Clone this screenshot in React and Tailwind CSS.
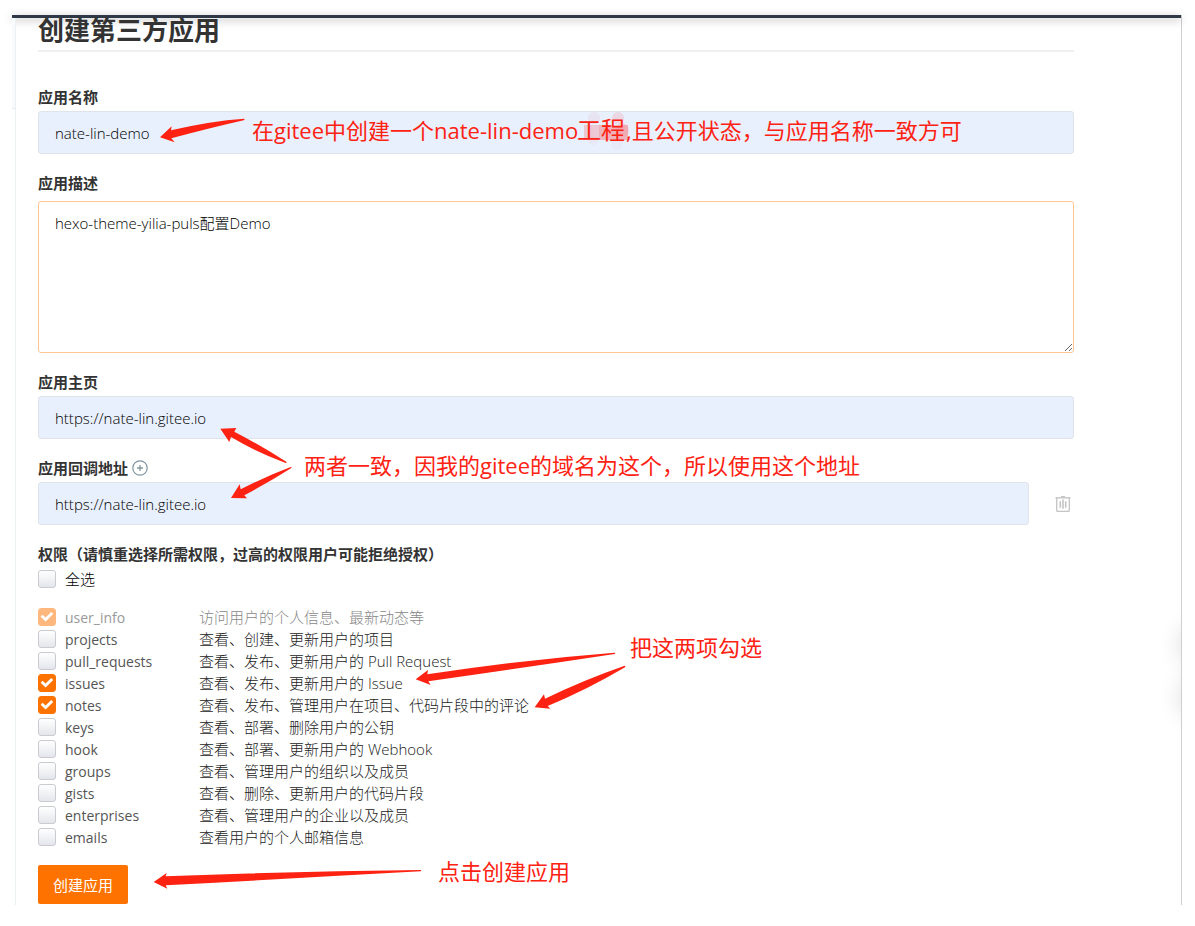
import { useState } from "react";

const SCOPES = [
    { name: "user_info", desc: "访问用户的个人信息、最新动态等", locked: true },
    { name: "projects", desc: "查看、创建、更新用户的项目" },
    { name: "pull_requests", desc: "查看、发布、更新用户的 Pull Request" },
    { name: "issues", desc: "查看、发布、更新用户的 Issue" },
    { name: "notes", desc: "查看、发布、管理用户在项目、代码片段中的评论" },
    { name: "keys", desc: "查看、部署、删除用户的公钥" },
    { name: "hook", desc: "查看、部署、更新用户的 Webhook" },
    { name: "groups", desc: "查看、管理用户的组织以及成员" },
    { name: "gists", desc: "查看、删除、更新用户的代码片段" },
    { name: "enterprises", desc: "查看、管理用户的企业以及成员" },
    { name: "emails", desc: "查看用户的个人邮箱信息" },
];

const labelClass = "block text-[15px] leading-5 font-bold text-[#333]";
const inputClass =
    "block w-full h-[43px] px-4 text-[15px] font-light text-black bg-[#e8effd] border border-[#dfe3ea] rounded-[3px] outline-none";

function Checkbox({ id, checked, disabled, onChange }) {
    return (
        <span className="grid shrink-0 w-[18px] h-[18px]">
            <input
                type="checkbox"
                id={id}
                checked={checked}
                disabled={disabled}
                onChange={onChange}
                className="col-start-1 row-start-1 appearance-none w-[18px] h-[18px] rounded-[3px] border border-[#c9cbd0] bg-linear-to-b from-white to-[#e3e6eb] checked:border-[#fe7300] checked:from-[#fe7300] checked:to-[#fe7300] disabled:opacity-50"
            />
            {checked && (
                <svg
                    viewBox="0 0 18 18"
                    className="col-start-1 row-start-1 relative w-[18px] h-[18px] pointer-events-none"
                    fill="none"
                    stroke="#fff"
                    strokeWidth="2.8"
                >
                    <path d="M3.6 7.8 L7.6 11.6 L14.2 5" />
                </svg>
            )}
        </span>
    );
}

// Hand-drawn tapered arrows, placed over the form
function Arrows({ className, viewBox, paths }) {
    return (
        <svg viewBox={viewBox} className={`absolute pointer-events-none ${className}`} fill="#fe2212">
            {paths.map((d) => (
                <path key={d} d={d} />
            ))}
        </svg>
    );
}

function Note({ className, children }) {
    return (
        <span
            className={`absolute whitespace-nowrap text-[22px] leading-[30px] text-[#fe2212] pointer-events-none ${className}`}
        >
            {children}
        </span>
    );
}

function App() {
    const [selected, setSelected] = useState(["user_info", "issues", "notes"]);

    const toggle = (name) =>
        setSelected((prev) => (prev.includes(name) ? prev.filter((n) => n !== name) : [...prev, name]));

    const allSelected = selected.length === SCOPES.length;
    const toggleAll = () => setSelected(allSelected ? ["user_info"] : SCOPES.map((s) => s.name));

    return (
        <div
            lang="zh-CN"
            className="bg-white pl-3 pr-[13px] pt-[15px] pb-5 font-['Open_Sans','Noto_Sans_CJK_SC',sans-serif]"
        >
            <div className="relative border-r border-[#cfcfcf]">
                <div className="h-[3px] bg-[#2e3846] shadow-[0_2px_8px_rgba(0,0,0,0.35)]"></div>

                <div className="flex">
                    <div className="w-[3px] h-[91px] bg-[#f9fafc] border-b border-[#e6eaee]"></div>

                    <main className="flex-1 min-w-0 border-l border-[#ebf0f2] pl-[22px] pr-[107px] pb-px">
                        <h1 className="text-[26px] leading-6 font-bold text-[#333] pb-2 border-b-2 border-[#f0f0f0]">
                            创建第三方应用
                        </h1>

                        <form className="flex flex-col gap-[19px] pt-[35px]" onSubmit={(e) => e.preventDefault()}>
                            <div className="relative">
                                <label htmlFor="app-name" className={labelClass}>
                                    应用名称
                                </label>
                                <input
                                    id="app-name"
                                    type="text"
                                    defaultValue="nate-lin-demo"
                                    className={`${inputClass} mt-1`}
                                />
                                <Arrows
                                    className="left-[122px] top-[31px] w-[86px] h-[26px]"
                                    viewBox="480 354 258 78"
                                    paths={["M480 412 L515 379 L513 391 Q630 363 733 356 Q735 359 731 361 Q630 384 514 415 L524 427 Z"]}
                                />
                                {/* Smudge behind the rewritten word */}
                                <svg
                                    viewBox="0 0 54 42"
                                    className="absolute left-[541px] top-[23px] w-[54px] h-[42px] pointer-events-none"
                                    fill="#f28f96"
                                >
                                    <rect x="5" y="15" width="44" height="15" opacity=".4" />
                                    <rect x="20" y="15" width="29" height="15" opacity=".35" />
                                    <circle cx="15" cy="8" r="6" opacity=".12" />
                                    <circle cx="39" cy="8" r="6" opacity=".25" />
                                    <circle cx="43" cy="20" r="7" opacity=".25" />
                                    <circle cx="14" cy="30" r="5" opacity=".06" />
                                    <circle cx="38" cy="34" r="6" opacity=".05" />
                                </svg>
                                <Note className="left-[214px] top-7">在gitee中创建一个nate-lin-demo</Note>
                                <span className="absolute left-[539px] top-7 text-2xl leading-[30px] text-[#fe2212] whitespace-nowrap pointer-events-none">
                                    工程
                                </span>
                                <Note className="left-[588px] top-7">,且公开状态，与应用名称一致方可</Note>
                            </div>

                            <div>
                                <label htmlFor="app-desc" className={labelClass}>
                                    应用描述
                                </label>
                                <textarea
                                    id="app-desc"
                                    defaultValue="hexo-theme-yilia-puls配置Demo"
                                    className="block w-full h-[152px] mt-2 px-4 py-2.5 text-[15px] leading-[22px] font-light text-black bg-white border border-[#ffc591] rounded-[3px] outline-none resize"
                                />
                            </div>

                            <div>
                                <label htmlFor="app-home" className={labelClass}>
                                    应用主页
                                </label>
                                <input
                                    id="app-home"
                                    type="text"
                                    defaultValue="https://nate-lin.gitee.io"
                                    className={`${inputClass} mt-1`}
                                />
                            </div>

                            <div className="relative">
                                <div className="flex items-center gap-1">
                                    <label htmlFor="app-callback" className={labelClass}>
                                        应用回调地址
                                    </label>
                                    <button type="button" aria-label="添加回调地址">
                                        <svg viewBox="0 0 16 16" className="w-4 h-4" fill="none" stroke="#84949d">
                                            <circle cx="8" cy="8" r="7.2" strokeWidth="1.2" />
                                            <path d="M8 5 V11 M5 8 H11" strokeWidth="1.3" />
                                        </svg>
                                    </button>
                                </div>
                                <div className="flex items-center mt-1">
                                    <input
                                        id="app-callback"
                                        type="text"
                                        defaultValue="https://nate-lin.gitee.io"
                                        className={`${inputClass} flex-1`}
                                    />
                                    <button type="button" aria-label="删除回调地址" className="pl-[26px] pr-[3px]">
                                        <svg viewBox="0 0 16 16" className="w-4 h-4" fill="none" stroke="#c4c4c4">
                                            <path d="M0.5 1.8 H15.5" strokeWidth="1.4" />
                                            <path d="M6 0.6 H10" strokeWidth="1.2" />
                                            <path d="M1.7 2 V14.4 Q1.7 15.4 2.7 15.4 H13.3 Q14.3 15.4 14.3 14.4 V2" strokeWidth="1.3" />
                                            <path d="M5.3 5.2 V11.8 M8 3.6 V12.8 M10.7 5.2 V11.8" strokeWidth="1.6" />
                                        </svg>
                                    </button>
                                </div>
                                <Arrows
                                    className="left-[182px] top-[-31px] w-[72px] h-[73px]"
                                    viewBox="660 1281 216 219"
                                    paths={[
                                        "M661 1286 L709 1284 L703 1295 Q780 1335 860 1386 Q859 1390 855 1388 Q770 1357 693 1311 L688 1326 Z",
                                        "M693 1494 L719 1453 L722 1468 Q800 1428 872 1401 Q877 1402 873 1405 Q810 1445 733 1486 L741 1495 Z",
                                    ]}
                                />
                                <Note className="left-[266px] -top-2">
                                    两者一致，因我的gitee的域名为这个，所以使用这个地址
                                </Note>
                            </div>

                            <fieldset>
                                <legend className={labelClass}>权限（请慎重选择所需权限，过高的权限用户可能拒绝授权）</legend>
                                <div className="flex items-center gap-[9px] mt-1 h-[22px]">
                                    <Checkbox id="scope-all" checked={allSelected} onChange={toggleAll} />
                                    <label htmlFor="scope-all" className="text-[15px] leading-[22px] font-light text-black">
                                        全选
                                    </label>
                                </div>

                                <div className="relative mt-4">
                                    {SCOPES.map(({ name, desc, locked }) => (
                                        <div key={name} className="flex items-center gap-[9px] h-[22px]">
                                            <Checkbox
                                                id={`scope-${name}`}
                                                checked={selected.includes(name)}
                                                disabled={locked}
                                                onChange={() => toggle(name)}
                                            />
                                            <label
                                                htmlFor={`scope-${name}`}
                                                className={`flex items-baseline leading-[22px] ${locked ? "text-[#888]" : "text-[#222]"}`}
                                            >
                                                <span className="w-[134px] text-sm text-[#555]">
                                                    {locked ? <span className="text-[#999]">{name}</span> : name}
                                                </span>
                                                <span className="text-[15px] font-light">{desc}</span>
                                            </label>
                                        </div>
                                    ))}
                                    <Arrows
                                        className="left-[377px] top-[46px] w-[212px] h-[58px]"
                                        viewBox="1245 1956 636 174"
                                        paths={[
                                            "M1247 2038 L1284 2010 L1282 2023 Q1560 1980 1843 1958 Q1848 1960 1844 1962 Q1560 2005 1285 2044 L1292 2055 Z",
                                            "M1604 2122 L1632 2083 L1635 2096 Q1750 2040 1874 1997 Q1879 1999 1875 2002 Q1760 2070 1643 2118 L1651 2126 Z",
                                        ]}
                                    />
                                    <Note className="left-[592px] top-[26px]">把这两项勾选</Note>
                                </div>
                            </fieldset>

                            <div className="relative -mt-0.5">
                                <button
                                    type="submit"
                                    className="block h-[39px] px-[15px] text-[15px] leading-5 text-white bg-[#fe7300] rounded-[2px]"
                                >
                                    创建应用
                                </button>
                                <Arrows
                                    className="left-[115px] top-[5px] w-[269px] h-[20px]"
                                    viewBox="459 2610 807 60"
                                    paths={["M461 2646 L500 2619 L497 2629 Q880 2614 1262 2610 Q1265 2612 1262 2614 Q880 2635 497 2656 L502 2666 Z"]}
                                />
                                <Note className="left-[400px] top-[-9px]">点击创建应用</Note>
                            </div>
                        </form>
                    </main>
                </div>

                {/* Shadows of the floating side buttons */}
                <div className="absolute right-0 top-[580px] w-8 h-[150px] overflow-hidden pointer-events-none">
                    <div className="absolute left-full top-[30px] w-10 h-10 rounded-full shadow-[0_0_24px_rgba(0,0,0,0.16)]"></div>
                    <div className="absolute left-full top-[82px] w-10 h-10 rounded-full shadow-[0_0_24px_rgba(0,0,0,0.16)]"></div>
                </div>
            </div>
        </div>
    );
}

export default App;
